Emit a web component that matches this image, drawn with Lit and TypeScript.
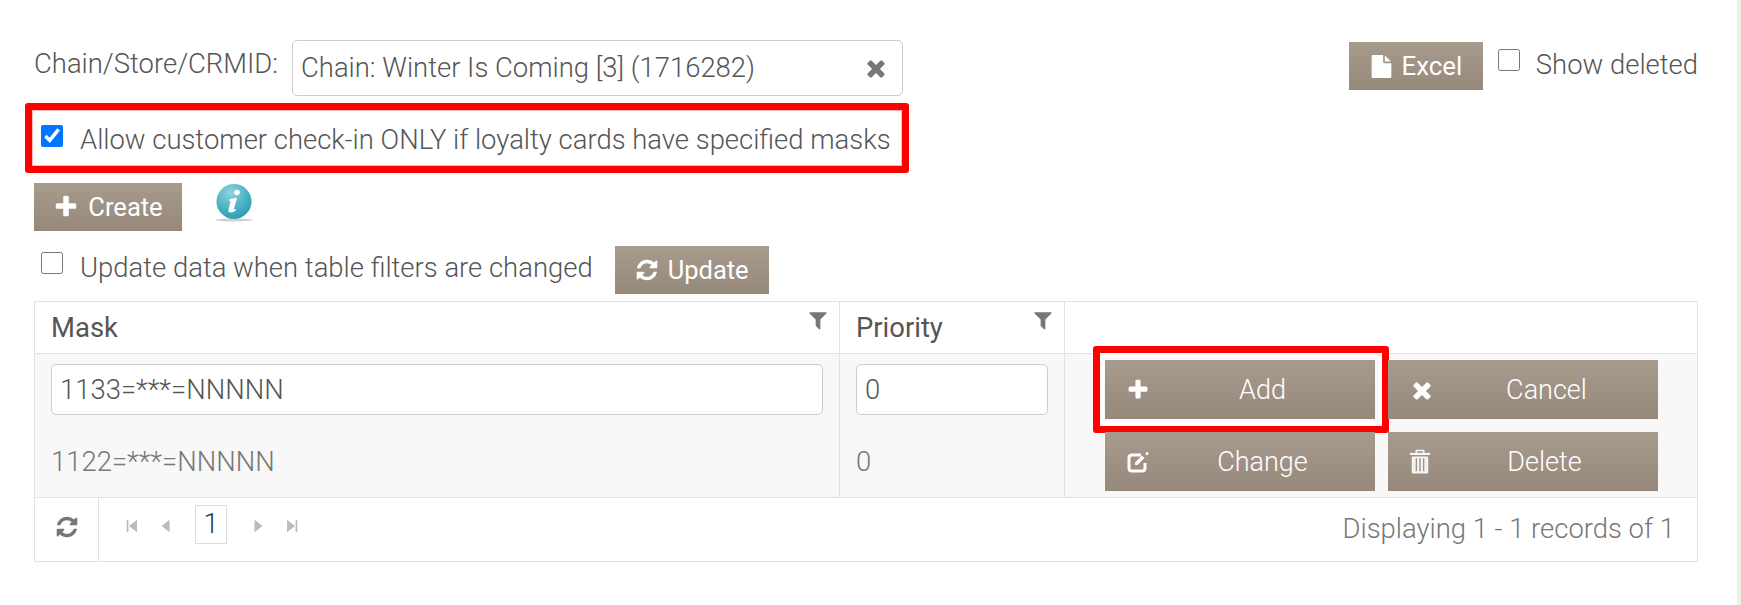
import { LitElement, html, css, svg } from 'lit'
import { customElement } from 'lit/decorators.js'

// font-awesome 4 outlines, 1792 box
const ICONS: Record<string, string> = {
  plus: 'M1600 736v192q0 40-28 68t-68 28h-416v416q0 40-28 68t-68 28h-192q-40 0-68-28t-28-68v-416h-416q-40 0-68-28t-28-68v-192q0-40 28-68t68-28h416v-416q0-40 28-68t68-28h192q40 0 68 28t28 68v416h416q40 0 68 28t28 68z',
  times: 'M1490 1322q0 40-28 68l-136 136q-28 28-68 28t-68-28l-294-294-294 294q-28 28-68 28t-68-28l-136-136q-28-28-28-68t28-68l294-294-294-294q-28-28-28-68t28-68l136-136q28-28 68-28t68 28l294 294 294-294q28-28 68-28t68 28l136 136q28 28 28 68t-28 68l-294 294 294 294q28 28 28 68z',
  file: 'M1152 512v-472q22 14 36 28l408 408q14 14 28 36h-472zm-128 32q0 40 28 68t68 28h544v1056q0 40-28 68t-68 28h-1344q-40 0-68-28t-28-68v-1600q0-40 28-68t68-28h800v544z',
  refresh: 'M1639 1056q0 5-1 7-64 268-268 434.5t-478 166.5q-146 0-282.5-55t-243.5-157l-129 129q-19 19-45 19t-45-19-19-45v-448q0-26 19-45t45-19h448q26 0 45 19t19 45-19 45l-137 137q71 66 161 102t187 36q134 0 250-65t186-179q11-17 53-117 8-23 30-23h192q13 0 22.5 9.5t9.5 22.5zm25-800v448q0 26-19 45t-45 19h-448q-26 0-45-19t-19-45 19-45l138-138q-148-137-349-137-134 0-250 65t-186 179q-11 17-53 117-8 23-30 23h-199q-13 0-22.5-9.5t-9.5-22.5v-7q65-268 270-434.5t480-166.5q146 0 284 55.5t245 156.5l130-129q19-19 45-19t45 19 19 45z',
  filter: 'M1595 295q17 41-14 70l-493 493v742q0 42-39 59-13 5-25 5-27 0-45-19l-256-256q-19-19-19-45v-486l-493-493q-31-29-14-70 17-39 59-39h1280q42 0 59 39z',
  first: 'M300 200h190v1392h-190zM1460 200v1392l-900-696z',
  prev: 'M1300 200v1392l-900-696z',
  next: 'M500 200v1392l900-696z',
  last: 'M1300 200h190v1392h-190zM340 200v1392l900-696z'
}

function icon (name: string, size: number) {
  return html`<svg class="ico" width=${size} height=${size} viewBox="0 0 1792 1792">
    ${svg`<path d=${ICONS[name]} fill="currentColor"></path>`}
  </svg>`
}

const editIcon = html`<svg class="ico" width="24" height="24" viewBox="0 0 24 24">
  <path d="M15 5h-9q-3 0-3 3v10q0 3 3 3h10q3 0 3-3v-5" fill="none" stroke="currentColor" stroke-width="3"></path>
  <path d="M9 12.500l7-7 2.500 2.500-7 7h-2.500z" fill="currentColor"></path>
  <circle cx="21" cy="3.500" r="1.500" fill="currentColor"></circle>
</svg>`

const trashIcon = html`<svg class="ico trash" width="22" height="26" viewBox="0 0 24 28">
  <path d="M8 4.500v-3h8v3" fill="none" stroke="currentColor" stroke-width="1.800"></path>
  <rect x="1" y="4" width="22" height="2.400" fill="currentColor"></rect>
  <rect x="3" y="8" width="18" height="18.500" rx="1" fill="currentColor"></rect>
  <path d="M8 10v14M12 10v14M16 10v14" stroke="#a0948a" stroke-width="1.500"></path>
</svg>`

@customElement('app-root')
export class AppRoot extends LitElement {
  static styles = css`
    :host {
      display: flex;
      width: 1741px;
      height: 605px;
      background: #fff;
      font-family: Roboto, "Liberation Sans", sans-serif;
      font-size: 27.45px;
      font-weight: 300;
      color: #555;
      overflow: hidden;
    }

    .page {
      flex: 1;
      padding: 40px 39px 0 34px;
    }

    .strip {
      width: 4px;
      background: #f1ede7;
    }

    .ico {
      display: block;
      flex: none;
    }

    .trash {
      opacity: 0.9;
    }

    .top {
      display: flex;
      align-items: flex-start;
      height: 56px;
    }

    .top-label {
      width: 258px;
      line-height: 56px;
      margin-top: -4px;
    }

    .chain {
      display: flex;
      align-items: center;
      justify-content: space-between;
      box-sizing: border-box;
      width: 611px;
      height: 56px;
      padding: 0 13px 0 8px;
      border: 1px solid #ccc;
      border-radius: 5px;
    }

    .chain .ico {
      color: #777;
    }

    label {
      display: flex;
      align-items: center;
    }

    input[type='checkbox'] {
      width: 22px;
      height: 22px;
      margin: 0 17px 0 7px;
      accent-color: #0075ff;
      flex: none;
    }

    .top-right {
      display: flex;
      align-items: flex-start;
      margin: 2px 0 0 auto;
    }

    .top-right label {
      margin: 0 0 0 15px;
      line-height: 46px;
      height: 46px;
      align-items: flex-start;
    }

    .top-right input[type='checkbox'] {
      margin: 7px 16px 0 0;
    }

    .btn {
      display: inline-flex;
      align-items: center;
      justify-content: center;
      gap: 9px;
      box-sizing: border-box;
      height: 48px;
      color: #fff;
      font-size: 25.5px;
      font-weight: 400;
      background: linear-gradient(#a79b8e, #96897b);
    }

    .excel {
      width: 134px;
      font-size: 25.8px;
    }

    .allow {
      position: relative;
      margin-top: 13px;
      height: 56px;
    }

    .allow label {
      height: 56px;
      padding-top: 5px;
      box-sizing: border-box;
    }

    .allow input[type='checkbox'] {
      margin-top: -8px;
    }

    .mark {
      position: absolute;
      box-sizing: border-box;
      border: 7px solid #f00;
      border-radius: 3px;
      pointer-events: none;
      box-shadow: inset 0 0 0 1px #fbb;
    }

    .allow .mark {
      left: -9px;
      top: -6px;
      bottom: -8px;
      width: 884px;
    }

    .create-row {
      display: flex;
      align-items: flex-start;
      gap: 32px;
      margin-top: 18px;
    }

    .create {
      width: 148px;
    }

    .info {
      display: block;
      margin-top: 1px;
    }

    .update-row {
      display: flex;
      align-items: center;
      margin-top: 15px;
    }

    .update-row label {
      margin-top: -5px;
    }

    .update-row input[type='checkbox'] {
      margin-top: -9px;
    }

    .update {
      width: 154px;
      margin-left: 22px;
    }

    .grid {
      display: grid;
      grid-template-columns: 805px 225px 1fr;
      grid-template-rows: 52px 72px 71px 64px;
      box-sizing: border-box;
      width: 1664px;
      height: 261px;
      margin-top: 7px;
      border: 1px solid #e2e2e2;
    }

    .head {
      position: relative;
      display: flex;
      align-items: center;
      padding-left: 16px;
      font-weight: 400;
      border-bottom: 1px solid #e2e2e2;
      border-right: 1px solid #e2e2e2;
    }

    .head:nth-child(3) {
      border-right: 0;
    }

    .head .ico {
      position: absolute;
      right: 10px;
      top: 7px;
      color: #777;
    }

    .cell {
      display: flex;
      align-items: center;
      box-sizing: border-box;
      padding: 0 16px;
      background: #f8f8f8;
      border-right: 1px solid #e2e2e2;
      color: #777;
    }

    .cell.first {
      align-items: flex-start;
      padding-top: 10px;
    }

    .field {
      display: block;
      box-sizing: border-box;
      width: 100%;
      height: 51px;
      line-height: 51px;
      padding: 0 8px;
      color: #555;
      background: #fff;
      border: 1px solid #ccc;
      border-radius: 5px;
    }

    .actions {
      display: grid;
      grid-template-columns: 270px 270px;
      column-gap: 13px;
      align-items: start;
      padding: 6px 0 0 40px;
      background: #f8f8f8;
    }

    .row-btn {
      position: relative;
      justify-content: flex-start;
      gap: 0;
      height: 59px;
      padding-left: 21px;
      font-weight: 300;
      font-size: 27px;
    }

    .row-btn span {
      flex: 1;
      text-align: center;
    }

    .add .mark {
      left: -12px;
      right: -14px;
      top: -14px;
      bottom: -14px;
      box-shadow: inset 0 0 0 4px #fff;
    }

    .foot {
      grid-column: 1 / -1;
      display: flex;
      align-items: stretch;
      border-top: 1px solid #e2e2e2;
    }

    .reload {
      display: flex;
      justify-content: center;
      align-items: center;
      box-sizing: border-box;
      width: 64px;
      padding-bottom: 6px;
      color: #777;
      border-right: 1px solid #e2e2e2;
    }

    .pager {
      display: flex;
      align-items: flex-start;
      padding: 7px 0 0 25px;
      color: #bbb;
    }

    .pager .ico {
      margin-top: 13px;
    }

    .num {
      box-sizing: border-box;
      width: 32px;
      height: 39px;
      margin: 0 23px 0 21px;
      line-height: 37px;
      text-align: center;
      color: #1b3a57;
      border: 1px solid #ddd;
    }

    .pager .gap {
      margin-right: 18px;
    }

    .count {
      margin-left: auto;
      padding: 15px 22px 0 0;
      color: #777;
    }
  `

  render () {
    return html`
      <div class="page">
        <div class="top">
          <div class="top-label">Chain/Store/CRMID:</div>
          <div class="chain">
            <span>Chain: Winter Is Coming [3] (1716282)</span>
            ${icon('times', 26)}
          </div>
          <div class="top-right">
            <div class="btn excel">${icon('file', 23)}<span>Excel</span></div>
            <label><input type="checkbox" />Show deleted</label>
          </div>
        </div>

        <div class="allow">
          <label><input type="checkbox" checked />Allow customer check-in ONLY if loyalty cards have specified masks</label>
          <div class="mark"></div>
        </div>

        <div class="create-row">
          <div class="btn create">${icon('plus', 26)}<span>Create</span></div>
          <svg class="info" width="40" height="38" viewBox="0 0 40 38">
            <defs>
              <radialGradient id="ball" cx="0.4" cy="0.25" r="0.85">
                <stop offset="0" stop-color="#8fd3de"></stop>
                <stop offset="0.6" stop-color="#45afc3"></stop>
                <stop offset="1" stop-color="#2a97ad"></stop>
              </radialGradient>
            </defs>
            <ellipse cx="20" cy="36" rx="19" ry="1.500" fill="#cfcfcf"></ellipse>
            <circle cx="20" cy="17.500" r="17.500" fill="url(#ball)"></circle>
            <circle cx="23" cy="8.500" r="2.800" fill="#fff"></circle>
            <path d="M16 15l7-1.200-3 11q-.3 1.300 1.800 .2l.5 1q-3.500 3-6.500 2.400-2-.6-1.300-3l2.300-8.400-1.800-.2z" fill="#fff"></path>
          </svg>
        </div>

        <div class="update-row">
          <label><input type="checkbox" />Update data when table filters are changed</label>
          <div class="btn update">${icon('refresh', 24)}<span>Update</span></div>
        </div>

        <div class="grid">
          <div class="head">Mask ${icon('filter', 22)}</div>
          <div class="head">Priority ${icon('filter', 22)}</div>
          <div class="head"></div>

          <div class="cell first"><div class="field">1133=***=NNNNN</div></div>
          <div class="cell first"><div class="field">0</div></div>
          <div class="actions">
            <div class="btn row-btn add">${icon('plus', 24)}<span>Add</span><div class="mark"></div></div>
            <div class="btn row-btn">${icon('times', 26)}<span>Cancel</span></div>
          </div>

          <div class="cell">1122=***=NNNNN</div>
          <div class="cell">0</div>
          <div class="actions">
            <div class="btn row-btn">${editIcon}<span>Change</span></div>
            <div class="btn row-btn">${trashIcon}<span>Delete</span></div>
          </div>

          <div class="foot">
            <div class="reload">${icon('refresh', 24)}</div>
            <div class="pager">
              <span class="gap">${icon('first', 16)}</span>
              ${icon('prev', 16)}
              <div class="num">1</div>
              <span class="gap">${icon('next', 16)}</span>
              ${icon('last', 16)}
            </div>
            <div class="count">Displaying 1 - 1 records of 1</div>
          </div>
        </div>
      </div>
      <div class="strip"></div>
    `
  }
}
